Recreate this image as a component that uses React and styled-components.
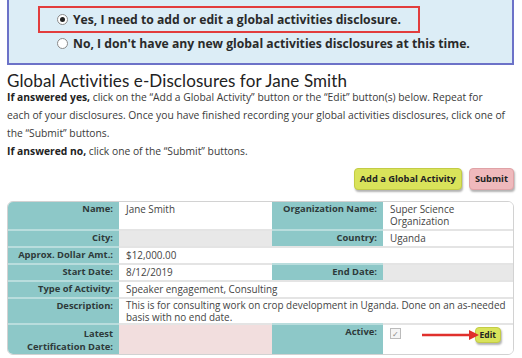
import React from 'react';
import styled, { createGlobalStyle } from 'styled-components';

const GlobalStyle = createGlobalStyle`
  body {
    margin: 0;
    background: #fff;
    font-family: "Open Sans", "Liberation Sans", sans-serif;
    color: #333;
  }
`;

const Page = styled.div`
  width: 507px;
  padding: 0 8px 0 7px;
`;

const ChoiceBox = styled.div`
  background: #dcedf6;
  border: 2px solid #6c72c8;
  border-top: none;
  padding: 6px 0 9px 29px;
`;

const Option = styled.label`
  box-sizing: border-box;
  display: flex;
  align-items: center;
  gap: 5px;
  width: ${p => (p.$highlighted ? '382px' : 'auto')};
  height: ${p => (p.$highlighted ? '27px' : '21px')};
  padding: 0 0 0 ${p => (p.$highlighted ? '17px' : '19px')};
  border: ${p => (p.$highlighted ? '2px solid #e23d3d' : 'none')};
  font-size: 12.2px;
  font-weight: 700;
  color: #2a2a2a;
  white-space: nowrap;
`;

const Radio = styled.span`
  flex: none;
  width: 9px;
  height: 9px;
  border-radius: 50%;
  border: 1px solid #8a8a8a;
  background: #fff;
  display: flex;
  align-items: center;
  justify-content: center;

  &::after {
    content: '';
    width: 5px;
    height: 5px;
    border-radius: 50%;
    background: ${p => (p.$checked ? '#222' : 'transparent')};
  }
`;

const Title = styled.h1`
  margin: 6px 0 -3px;
  font-family: Lato, "Liberation Sans", sans-serif;
  font-size: 17px;
  line-height: 20px;
  font-weight: 400;
  color: #222;
  letter-spacing: 0.1px;
`;

const Intro = styled.p`
  margin: 0;
  font-size: 10.3px;
  line-height: 18px;
  color: #3a3a3a;
  white-space: nowrap;

  b {
    font-weight: 700;
    color: #222;
  }
`;

const Actions = styled.div`
  display: flex;
  justify-content: flex-end;
  gap: 7px;
  margin: 8px 0 11px;
`;

const Button = styled.button`
  font-family: inherit;
  font-weight: 700;
  font-size: ${p => (p.$small ? '8.5px' : '9.3px')};
  color: #222;
  background: ${p => (p.$tone === 'pink' ? '#efb9bc' : '#d9e35a')};
  border: 1px solid ${p => (p.$tone === 'pink' ? '#e0a2a6' : '#c3cc45')};
  border-radius: 4px;
  box-shadow: 1px 2px 2px rgba(0, 0, 0, 0.3);
  height: ${p => (p.$small ? '16px' : '22px')};
  padding: ${p => (p.$small ? '0 4px' : '0 5px')};
  line-height: 1;
  cursor: pointer;
`;

const TableWrap = styled.div`
  border: 1px solid #d2d2d2;
  border-radius: 6px;
  overflow: hidden;
`;

const Table = styled.table`
  width: 100%;
  border-collapse: collapse;
  border-spacing: 0;
  table-layout: fixed;
  font-size: 9.4px;
  line-height: 12px;
`;

const Label = styled.th`
  background: #8dc8c8;
  text-align: right;
  vertical-align: top;
  font-weight: 700;
  color: #2d3a3a;
  padding: ${p => (p.$tall ? '2px 6px 1px 4px' : '1px 6px 2px 4px')};
  border-top: 2px solid #b9dddd;
  line-height: ${p => (p.$tall ? '13px' : '12px')};

  tr:first-child > & {
    border-top: none;
  }
`;

const Value = styled.td`
  background: ${p => (p.$tone === 'grey' ? '#e8e8e8' : p.$tone === 'pink' ? '#f2dede' : '#fff')};
  vertical-align: top;
  font-size: 9.9px;
  line-height: 12px;
  color: #444;
  padding: ${p => (p.$tight ? '0 6px 0 7px' : '1px 6px 2px 7px')};
  border-top: 2px solid #e4e4e4;
  position: relative;

  tr:first-child > & {
    border-top: none;
  }
`;

const ActiveCell = styled.div`
  display: flex;
  justify-content: space-between;
  align-items: flex-start;
  padding: 1px 6px 0 0;
`;

const Check = styled.span`
  width: 9px;
  height: 9px;
  margin-top: 1px;
  border: 1px solid #bbb;
  background: #f4f4f4;
  color: #888;
  font-size: 8px;
  line-height: 9px;
  text-align: center;
`;

const Arrow = styled.svg`
  position: absolute;
  left: 39px;
  top: 5px;
`;

export default function App() {
  return (
    <Page>
      <GlobalStyle />
      <ChoiceBox>
        <Option $highlighted>
          <Radio $checked />
          Yes, I need to add or edit a global activities disclosure.
        </Option>
        <Option>
          <Radio />
          No, I don't have any new global activities disclosures at this time.
        </Option>
      </ChoiceBox>

      <Title>Global Activities e-Disclosures for Jane Smith</Title>
      <Intro>
        <b>If answered yes,</b> click on the “Add a Global Activity” button or the “Edit” button(s) below. Repeat for
        <br />
        each of your disclosures. Once you have finished recording your global activities disclosures, click one of
        <br />
        the “Submit” buttons.
      </Intro>
      <Intro>
        <b>If answered no,</b> click one of the “Submit” buttons.
      </Intro>

      <Actions>
        <Button>Add a Global Activity</Button>
        <Button $tone="pink">Submit</Button>
      </Actions>

      <TableWrap>
        <Table>
          <colgroup>
            <col style={{ width: 111 }} />
            <col style={{ width: 153 }} />
            <col style={{ width: 111 }} />
            <col />
          </colgroup>
          <tbody>
            <tr>
              <Label>Name:</Label>
              <Value>Jane Smith</Value>
              <Label>Organization Name:</Label>
              <Value>Super Science Organization</Value>
            </tr>
            <tr>
              <Label>City:</Label>
              <Value $tone="grey" />
              <Label>Country:</Label>
              <Value>Uganda</Value>
            </tr>
            <tr>
              <Label>Approx. Dollar Amt.:</Label>
              <Value colSpan={3}>$12,000.00</Value>
            </tr>
            <tr>
              <Label>Start Date:</Label>
              <Value>8/12/2019</Value>
              <Label>End Date:</Label>
              <Value $tone="grey" />
            </tr>
            <tr>
              <Label>Type of Activity:</Label>
              <Value colSpan={3}>Speaker engagement, Consulting</Value>
            </tr>
            <tr>
              <Label>Description:</Label>
              <Value colSpan={3} $tight>
                This is for consulting work on crop development in Uganda. Done on an as-needed basis with no end date.
              </Value>
            </tr>
            <tr>
              <Label $tall>Latest<br />Certification Date:</Label>
              <Value $tone="pink" />
              <Label>Active:</Label>
              <Value>
                <ActiveCell>
                  <Check>✓</Check>
                  <Button $small>Edit</Button>
                </ActiveCell>
                <Arrow width="58" height="10" viewBox="0 0 58 10">
                  <line x1="0" y1="5" x2="50" y2="5" stroke="#e0302c" strokeWidth="2.5" />
                  <polygon points="47,0 57,5 47,10" fill="#e0302c" />
                </Arrow>
              </Value>
            </tr>
          </tbody>
        </Table>
      </TableWrap>
    </Page>
  );
}
